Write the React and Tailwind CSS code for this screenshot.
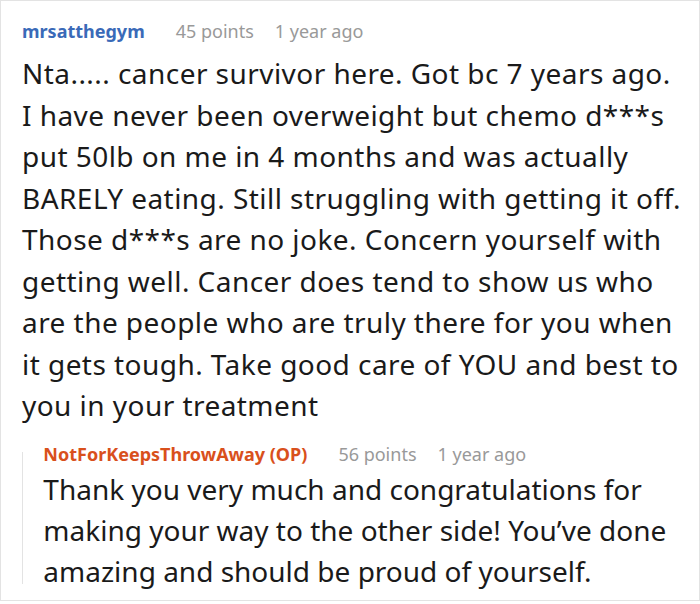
export default function App() {
  return (
    <div className="w-[700px] h-[604px] bg-white" style={{ fontFamily: '"Noto Sans", sans-serif' }}>
      <div className="h-[601px] border border-[#e3e3e3] pl-[21px] pr-[12px] pt-[16px]">
        <div className="flex items-baseline gap-[31px] text-[18px] leading-[28px]">
          <span className="font-bold text-[#3a6ab8]">mrsatthegym</span>
          <span className="text-[#999999]">45 points</span>
          <span className="text-[#999999] -ml-[10px]">1 year ago</span>
        </div>
        <p className="mt-[8px] text-[28px] leading-[41.5px] tracking-[0.45px] text-[#1a1a1a]">
          Nta..... cancer survivor here. Got bc 7 years ago. I have never been overweight but chemo d***s put 50lb on me in 4 months and was actually BARELY eating. Still struggling with getting it off. Those d***s are no joke. Concern yourself with getting well. Cancer does tend to show us who are the people who are truly there for you when it gets tough. Take good care of YOU and best to you in your treatment
        </p>
        <div className="mt-[13px] flex">
          <div className="w-px bg-[#e3e3e3] mt-[12px] mb-[8px]" />
          <div className="pl-[21px]">
            <div className="flex items-baseline gap-[31px] text-[18px] leading-[28px]">
              <span className="font-bold text-[#d9501c]">NotForKeepsThrowAway (OP)</span>
              <span className="text-[#999999]">56 points</span>
              <span className="text-[#999999] -ml-[10px]">1 year ago</span>
            </div>
            <p className="mt-[1px] text-[28px] leading-[41px] text-[#1a1a1a]">
              Thank you very much and congratulations for making your way to the other side! You’ve done amazing and should be proud of yourself.
            </p>
          </div>
        </div>
      </div>
    </div>
  );
}
